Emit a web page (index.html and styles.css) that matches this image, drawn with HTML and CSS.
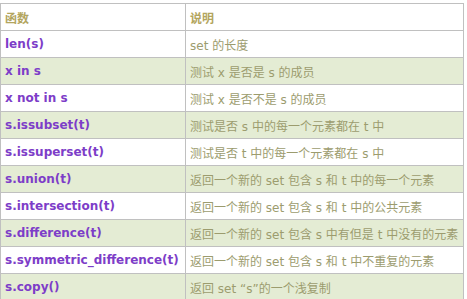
FILE: index.html
```html
<!DOCTYPE html>
<html>
<head>
<meta charset="utf-8">
<link rel="stylesheet" href="styles.css">
</head>
<body>
<table class="ref">
  <tr class="head"><th class="c1">函数</th><th class="c2">说明</th></tr>
  <tr><td class="fn">len(s)</td><td class="desc">set 的长度</td></tr>
  <tr class="alt"><td class="fn">x in s</td><td class="desc">测试 x 是否是 s 的成员</td></tr>
  <tr><td class="fn">x not in s</td><td class="desc">测试 x 是否不是 s 的成员</td></tr>
  <tr class="alt"><td class="fn">s.issubset(t)</td><td class="desc">测试是否 s 中的每一个元素都在 t 中</td></tr>
  <tr><td class="fn">s.issuperset(t)</td><td class="desc">测试是否 t 中的每一个元素都在 s 中</td></tr>
  <tr class="alt"><td class="fn">s.union(t)</td><td class="desc">返回一个新的 set 包含 s 和 t 中的每一个元素</td></tr>
  <tr><td class="fn">s.intersection(t)</td><td class="desc">返回一个新的 set 包含 s 和 t 中的公共元素</td></tr>
  <tr class="alt"><td class="fn">s.difference(t)</td><td class="desc">返回一个新的 set 包含 s 中有但是 t 中没有的元素</td></tr>
  <tr><td class="fn">s.symmetric_difference(t)</td><td class="desc">返回一个新的 set 包含 s 和 t 中不重复的元素</td></tr>
  <tr class="alt"><td class="fn">s.copy()</td><td class="desc">返回 set “s”的一个浅复制</td></tr>
</table>
</body>
</html>
```
FILE: styles.css
```css
html, body {
  margin: 0;
  padding: 0;
  background: #ffffff;
}
body {
  padding-top: 3px;
  font-family: "DejaVu Sans", Verdana, "Noto Sans CJK SC", sans-serif;
  font-size: 12px;
}
.ref {
  border-collapse: collapse;
  width: 464px;
  table-layout: fixed;
}
.ref th, .ref td {
  border: 1px solid #c0c0c0;
  height: 26px;
  padding: 0 0 0 4px;
  text-align: left;
  vertical-align: middle;
  white-space: nowrap;
  overflow: hidden;
}
.ref .c1 { width: 180px; }
.ref th {
  font-weight: bold;
  color: #b3a55e;
  font-family: "Noto Sans CJK SC", sans-serif;
  font-size: 12px;
}
.ref .alt td {
  background: #e4ecd4;
}
.fn {
  font-weight: bold;
  color: #7d3dc8;
  font-size: 12px;
}
.desc {
  color: #9c9c6e;
  font-family: "DejaVu Sans", "Noto Sans CJK SC", sans-serif;
}
```
